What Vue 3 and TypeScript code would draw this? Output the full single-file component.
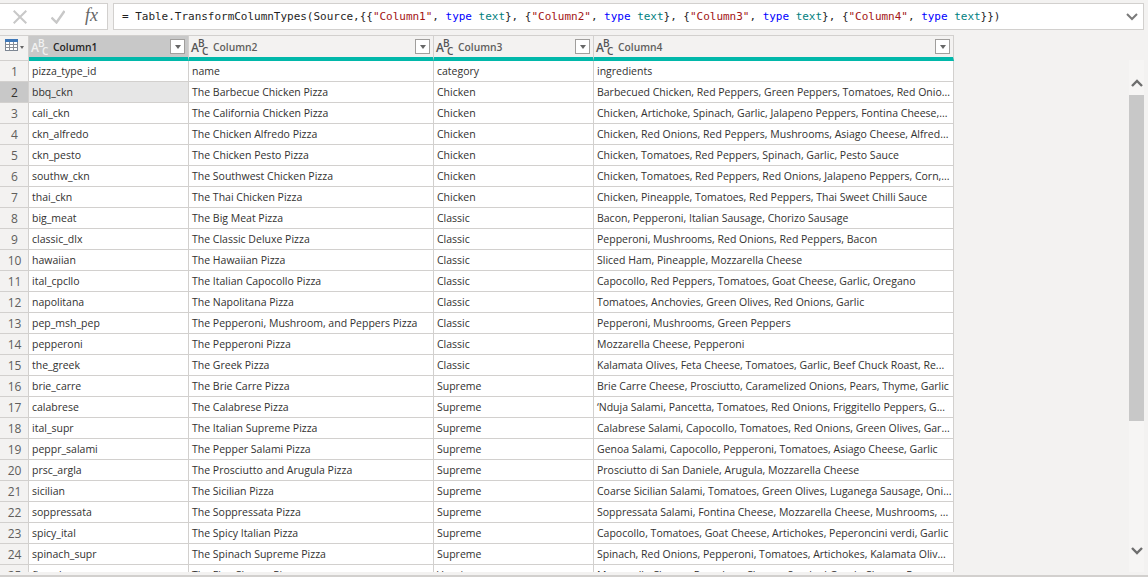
<template>
  <div class="editor">
    <div class="formula-bar">
      <div class="formula-buttons">
        <svg width="14" height="14" viewBox="0 0 14 14"><path d="M0.7 0.7 L13.3 13.3 M13.3 0.7 L0.7 13.3" stroke="#c8c8c8" stroke-width="2" fill="none" /></svg>
        <svg width="14" height="14" viewBox="0 0 14 14"><path d="M0.5 7.5 L5.5 12.5 L13.5 1" stroke="#c8c8c8" stroke-width="2.4" fill="none" /></svg>
        <span class="fx">fx</span>
      </div>
      <div class="formula-input">
        <code class="formula"><span v-for="(t, i) in formula" :key="i" :class="t.c">{{ t.t }}</span></code>
        <svg width="12" height="8" viewBox="0 0 12 8"><path d="M1 1 L6 6 L11 1" stroke="#7a7a7a" stroke-width="2" fill="none" /></svg>
      </div>
    </div>

    <div class="body">
      <div class="grid-wrap">
        <div class="grid">
          <div class="corner">
            <svg width="13" height="12" viewBox="0 0 13 12">
              <rect x="0.5" y="0.5" width="12" height="11" fill="#fff" stroke="#7d8794" />
              <rect x="0" y="0" width="13" height="3" fill="#3f78b8" />
              <path d="M4.5 3 V11.5 M8.5 3 V11.5 M0.5 5.5 H12.5 M0.5 8.5 H12.5" stroke="#8a8f96" fill="none" />
            </svg>
            <span class="corner-caret"></span>
          </div>
          <div v-for="(h, i) in headers" :key="h" class="head" :class="{ 'head-sel': i === 0 }">
            <span class="type-icon"><i class="a">A</i><i class="b">B</i><i class="c">C</i></span>
            <span class="head-label">{{ h }}</span>
            <span class="filter"><span class="filter-caret"></span></span>
          </div>

          <template v-for="(r, i) in rows" :key="i">
            <div class="num" :class="{ 'num-sel': i === 1 }">{{ i + 1 }}</div>
            <div v-for="(v, j) in r" :key="j" class="cell" :class="{ 'cell-sel': i === 1 && j === 0 }">{{ v }}</div>
          </template>
        </div>
      </div>

      <div class="scrollbar">
        <svg class="arrow-up" width="12" height="8" viewBox="0 0 12 8"><path d="M1 7 L6 2 L11 7" stroke="#6e6e6e" stroke-width="2.4" fill="none" /></svg>
        <div class="track"><div class="thumb"></div></div>
        <svg class="arrow-down" width="12" height="8" viewBox="0 0 12 8"><path d="M1 1 L6 6 L11 1" stroke="#6e6e6e" stroke-width="2.4" fill="none" /></svg>
      </div>
    </div>
    <div class="status-line"></div>
  </div>
</template>

<script setup lang="ts">
const headers = ['Column1', 'Column2', 'Column3', 'Column4']

const formula: { t: string; c: string }[] = [{ t: '= Table.TransformColumnTypes(Source,{', c: '' }]
headers.forEach((h, i) => {
  formula.push(
    { t: '{', c: '' },
    { t: `"${h}"`, c: 'str' },
    { t: ', ', c: '' },
    { t: 'type', c: 'kw' },
    { t: ' ', c: '' },
    { t: 'text', c: 'ty' },
    { t: i < headers.length - 1 ? '}, ' : '}})', c: '' },
  )
})

const rows: string[][] = [
  ['pizza_type_id', 'name', 'category', 'ingredients'],
  ['bbq_ckn', 'The Barbecue Chicken Pizza', 'Chicken', 'Barbecued Chicken, Red Peppers, Green Peppers, Tomatoes, Red Onio...'],
  ['cali_ckn', 'The California Chicken Pizza', 'Chicken', 'Chicken, Artichoke, Spinach, Garlic, Jalapeno Peppers, Fontina Cheese,...'],
  ['ckn_alfredo', 'The Chicken Alfredo Pizza', 'Chicken', 'Chicken, Red Onions, Red Peppers, Mushrooms, Asiago Cheese, Alfred...'],
  ['ckn_pesto', 'The Chicken Pesto Pizza', 'Chicken', 'Chicken, Tomatoes, Red Peppers, Spinach, Garlic, Pesto Sauce'],
  ['southw_ckn', 'The Southwest Chicken Pizza', 'Chicken', 'Chicken, Tomatoes, Red Peppers, Red Onions, Jalapeno Peppers, Corn,...'],
  ['thai_ckn', 'The Thai Chicken Pizza', 'Chicken', 'Chicken, Pineapple, Tomatoes, Red Peppers, Thai Sweet Chilli Sauce'],
  ['big_meat', 'The Big Meat Pizza', 'Classic', 'Bacon, Pepperoni, Italian Sausage, Chorizo Sausage'],
  ['classic_dlx', 'The Classic Deluxe Pizza', 'Classic', 'Pepperoni, Mushrooms, Red Onions, Red Peppers, Bacon'],
  ['hawaiian', 'The Hawaiian Pizza', 'Classic', 'Sliced Ham, Pineapple, Mozzarella Cheese'],
  ['ital_cpcllo', 'The Italian Capocollo Pizza', 'Classic', 'Capocollo, Red Peppers, Tomatoes, Goat Cheese, Garlic, Oregano'],
  ['napolitana', 'The Napolitana Pizza', 'Classic', 'Tomatoes, Anchovies, Green Olives, Red Onions, Garlic'],
  ['pep_msh_pep', 'The Pepperoni, Mushroom, and Peppers Pizza', 'Classic', 'Pepperoni, Mushrooms, Green Peppers'],
  ['pepperoni', 'The Pepperoni Pizza', 'Classic', 'Mozzarella Cheese, Pepperoni'],
  ['the_greek', 'The Greek Pizza', 'Classic', 'Kalamata Olives, Feta Cheese, Tomatoes, Garlic, Beef Chuck Roast, Re...'],
  ['brie_carre', 'The Brie Carre Pizza', 'Supreme', 'Brie Carre Cheese, Prosciutto, Caramelized Onions, Pears, Thyme, Garlic'],
  ['calabrese', 'The Calabrese Pizza', 'Supreme', '‘Nduja Salami, Pancetta, Tomatoes, Red Onions, Friggitello Peppers, G...'],
  ['ital_supr', 'The Italian Supreme Pizza', 'Supreme', 'Calabrese Salami, Capocollo, Tomatoes, Red Onions, Green Olives, Gar...'],
  ['peppr_salami', 'The Pepper Salami Pizza', 'Supreme', 'Genoa Salami, Capocollo, Pepperoni, Tomatoes, Asiago Cheese, Garlic'],
  ['prsc_argla', 'The Prosciutto and Arugula Pizza', 'Supreme', 'Prosciutto di San Daniele, Arugula, Mozzarella Cheese'],
  ['sicilian', 'The Sicilian Pizza', 'Supreme', 'Coarse Sicilian Salami, Tomatoes, Green Olives, Luganega Sausage, Oni...'],
  ['soppressata', 'The Soppressata Pizza', 'Supreme', 'Soppressata Salami, Fontina Cheese, Mozzarella Cheese, Mushrooms, ...'],
  ['spicy_ital', 'The Spicy Italian Pizza', 'Supreme', 'Capocollo, Tomatoes, Goat Cheese, Artichokes, Peperoncini verdi, Garlic'],
  ['spinach_supr', 'The Spinach Supreme Pizza', 'Supreme', 'Spinach, Red Onions, Pepperoni, Tomatoes, Artichokes, Kalamata Oliv...'],
  ['five_cheese', 'The Five Cheese Pizza', 'Veggie', 'Mozzarella Cheese, Provolone Cheese, Smoked Gouda Cheese, Romano...'],
]
</script>

<style scoped>
.editor {
  width: 1148px;
  height: 577px;
  background: #f3f2f1;
  display: flex;
  flex-direction: column;
  overflow: hidden;
  font-family: "Open Sans", "Noto Sans", sans-serif;
  font-size: 10.5px;
  color: #323130;
}
.formula-bar {
  display: flex;
  gap: 5px;
  padding: 3px 4px 0 0;
  height: 27px;
  flex: none;
}
.formula-buttons {
  width: 108px;
  background: #fff;
  border: 1px solid #d2d0ce;
  border-left: 0;
  box-sizing: border-box;
  display: flex;
  align-items: center;
  padding-left: 13px;
  gap: 24px;
}
.fx {
  font-family: "Liberation Serif", serif;
  font-style: italic;
  font-size: 18px;
  color: #666;
  margin-left: -4px;
  margin-top: -2px;
}
.formula-input {
  flex: 1;
  background: #fff;
  border: 1px solid #d2d0ce;
  box-sizing: border-box;
  display: flex;
  align-items: center;
  justify-content: space-between;
  padding: 0 5px 0 8px;
}
.formula {
  font-family: "DejaVu Sans Mono", monospace;
  font-size: 11px;
  letter-spacing: -0.02px;
  color: #1f1f1f;
  white-space: pre;
}
.str { color: #a31515; }
.kw { color: #0000ff; }
.ty { color: #008080; }
.body {
  flex: 1;
  display: flex;
  min-height: 0;
  padding-top: 5px;
}
.grid-wrap {
  width: 954px;
  height: 537px;
  overflow: hidden;
  flex: none;
}
.grid {
  display: grid;
  grid-template-columns: 29px 160px 245px 160px 360px;
  grid-auto-rows: 21px;
  grid-template-rows: 25px;
  box-sizing: border-box;
  border-top: 1px solid #d2d0ce;
  width: 954px;
}
.corner {
  display: flex;
  align-items: center;
  padding: 0 0 6px 5px;
  gap: 2px;
  border-bottom: 1px solid #d2d0ce;
  border-right: 1px solid #d2d0ce;
}
.corner-caret {
  width: 0;
  height: 0;
  border: 2.5px solid transparent;
  border-top: 3px solid #666;
  margin-top: 7px;
}
.head {
  display: flex;
  align-items: center;
  border-bottom: 4px solid #01b8aa;
  border-right: 1px solid #d2d0ce;
  padding: 0 2px;
  min-width: 0;
}
.head-sel {
  background: #c8c8c8;
}
.head-sel .head-label {
  color: #252423;
}
.head-sel .type-icon i {
  color: #f2f2f2;
}
.type-icon {
  position: relative;
  width: 20px;
  height: 18px;
  flex: none;
  line-height: 1;
  color: #555;
}
.type-icon i {
  position: absolute;
  font-style: normal;
  font-weight: 600;
  font-family: "Open Sans", sans-serif;
}
.type-icon .a { left: 0; top: 4px; font-size: 12px; }
.type-icon .b { left: 7px; top: 0; font-size: 10px; }
.type-icon .c { left: 11px; top: 8px; font-size: 10px; }
.head-label {
  flex: 1;
  margin-left: 2px;
  font-size: 10.3px;
  font-weight: 600;
  color: #605e5c;
  white-space: nowrap;
}
.filter {
  width: 15px;
  height: 15px;
  box-sizing: border-box;
  border: 1px solid #a19f9d;
  background: #fff;
  display: flex;
  align-items: center;
  justify-content: center;
  flex: none;
  margin: 0 1px 1px 0;
}
.filter-caret {
  width: 0;
  height: 0;
  border: 3.5px solid transparent;
  border-top: 4px solid #666;
  margin-top: 4px;
}
.num {
  display: flex;
  align-items: center;
  justify-content: center;
  font-size: 12px;
  color: #605e5c;
  background: #f3f2f1;
  border-right: 1px solid #d2d0ce;
  border-bottom: 1px solid #d2d0ce;
  padding-left: 1px;
}
.num-sel {
  background: #c8c8c8;
  color: #323130;
}
.cell {
  display: flex;
  align-items: center;
  padding: 0 3px;
  background: #fff;
  white-space: nowrap;
  overflow: hidden;
  border-right: 1px solid #d2d0ce;
  border-bottom: 1px solid #d2d0ce;
}
.cell-sel {
  background: #e6e6e6;
}
.scrollbar {
  margin-left: auto;
  margin-right: 4px;
  margin-top: 25px;
  width: 15px;
  height: 512px;
  background: #f6f5f4;
  display: flex;
  flex-direction: column;
  align-items: center;
}
.arrow-up {
  flex: none;
  margin: 19px 0 8px;
}
.arrow-down {
  flex: none;
  margin: 8px 0 17px;
}
.track {
  flex: 1;
  width: 100%;
}
.thumb {
  width: 100%;
  height: 326px;
  background: #c8c8c8;
}
.status-line {
  height: 2px;
  flex: none;
  margin-top: 2px;
  background: #d2d0ce;
}
</style>

<style>
html, body {
  margin: 0;
  background: #f3f2f1;
}
</style>
